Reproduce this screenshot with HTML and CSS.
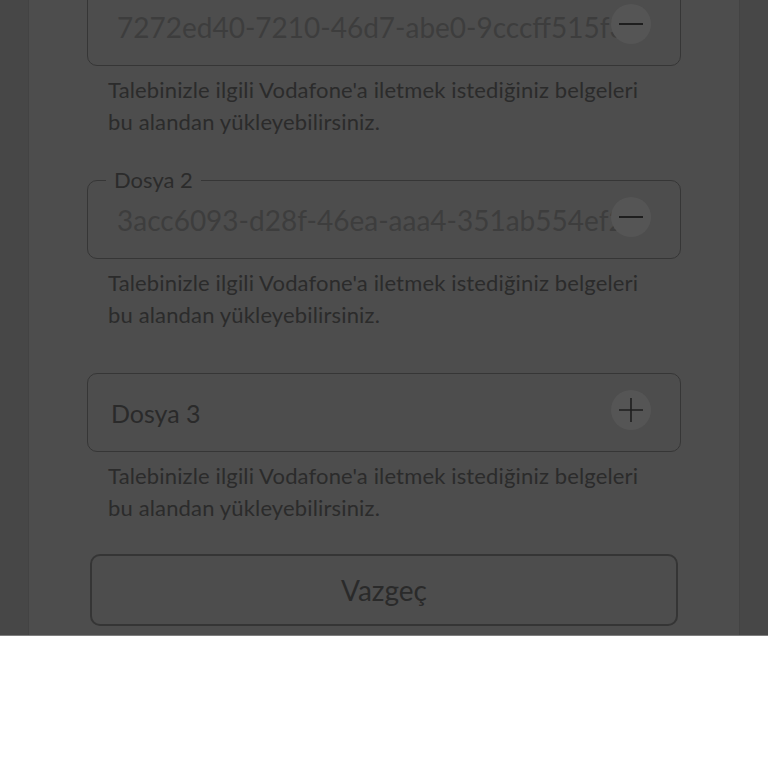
FILE: index.html
```html
<!DOCTYPE html>
<html lang="tr">
<head>
    <meta charset="UTF-8">
    <meta name="viewport" content="width=device-width, initial-scale=1.0">
    <title>Dosya Yükleme</title>
    <link rel="stylesheet" href="styles.css">
</head>
<body>

<div class="screen">
    <div class="panel">
        <div class="form">

            <!-- Dosya 1 -->
            <div class="field filled">
                <span class="legend">Dosya 1</span>
                <span class="value">7272ed40-7210-46d7-abe0-9cccff515f3a.pdf</span>
                <span class="icon-btn">
                    <svg width="26" height="26" viewBox="0 0 26 26"><path d="M1 13 H25" stroke="#1e1e1e" stroke-width="2"/></svg>
                </span>
            </div>
            <p class="hint">Talebinizle ilgili Vodafone'a iletmek istediğiniz belgeleri bu alandan yükleyebilirsiniz.</p>

            <!-- Dosya 2 -->
            <div class="field filled">
                <span class="legend">Dosya 2</span>
                <span class="value">3acc6093-d28f-46ea-aaa4-351ab554ef2b.pdf</span>
                <span class="icon-btn">
                    <svg width="26" height="26" viewBox="0 0 26 26"><path d="M1 13 H25" stroke="#1e1e1e" stroke-width="2"/></svg>
                </span>
            </div>
            <p class="hint">Talebinizle ilgili Vodafone'a iletmek istediğiniz belgeleri bu alandan yükleyebilirsiniz.</p>

            <!-- Dosya 3 -->
            <div class="field">
                <span class="label">Dosya 3</span>
                <span class="icon-btn">
                    <svg width="26" height="26" viewBox="0 0 26 26"><path d="M1 13 H25 M13 1 V25" stroke="#1e1e1e" stroke-width="1.6"/></svg>
                </span>
            </div>
            <p class="hint">Talebinizle ilgili Vodafone'a iletmek istediğiniz belgeleri bu alandan yükleyebilirsiniz.</p>

            <button class="cancel">Vazgeç</button>
        </div>
    </div>
</div>

</body>
</html>
```

FILE: styles.css
```css
body {
    margin: 0;
    background-color: #fff;
    font-family: Lato, "Noto Sans", sans-serif;
}
.screen {
    height: 635px;
    background-color: #474747;
    border-bottom: 1px solid #7d7d7d;
    overflow: hidden;
}
.panel {
    display: flow-root;
    margin: 0 28px;
    height: 100%;
    padding: 0 58px;
    background-color: #4d4d4d;
    border-left: 1px solid #434343;
    border-right: 1px solid #434343;
}
.form {
    margin-top: -13px;
}
.field {
    position: relative;
    height: 79px;
    box-sizing: border-box;
    display: flex;
    align-items: center;
    padding: 0 29px 0 23px;
    border: 1px solid #363636;
    border-radius: 10px;
}
.legend {
    position: absolute;
    top: -13px;
    left: 18px;
    padding: 0 8px;
    font-size: 22px;
    line-height: 24px;
    color: #2b2b2b;
    background-color: #4d4d4d;
}
.value {
    flex: 1;
    min-width: 0;
    padding-left: 6px;
    margin-right: -36px;
    font-size: 28px;
    color: #3d3d3d;
    white-space: nowrap;
    overflow: hidden;
    text-overflow: ellipsis;
}
.label {
    flex: 1;
    font-size: 25px;
    color: #2a2a2a;
}
.icon-btn {
    position: relative;
    width: 40px;
    height: 40px;
    margin-top: -5px;
    border-radius: 50%;
    background-color: #555;
    display: flex;
    align-items: center;
    justify-content: center;
}
.hint {
    max-width: 545px;
    margin: 8px 0 42px;
    padding-left: 21px;
    font-size: 22px;
    line-height: 32px;
    letter-spacing: 0.15px;
    color: #2b2b2b;
}
.hint:last-of-type {
    margin-bottom: 30px;
}
.cancel {
    display: block;
    width: 588px;
    height: 72px;
    margin: 0 3px;
    background: transparent;
    border: 2px solid #353535;
    border-radius: 10px;
    font-family: inherit;
    font-size: 28px;
    color: #2a2a2a;
}
```
